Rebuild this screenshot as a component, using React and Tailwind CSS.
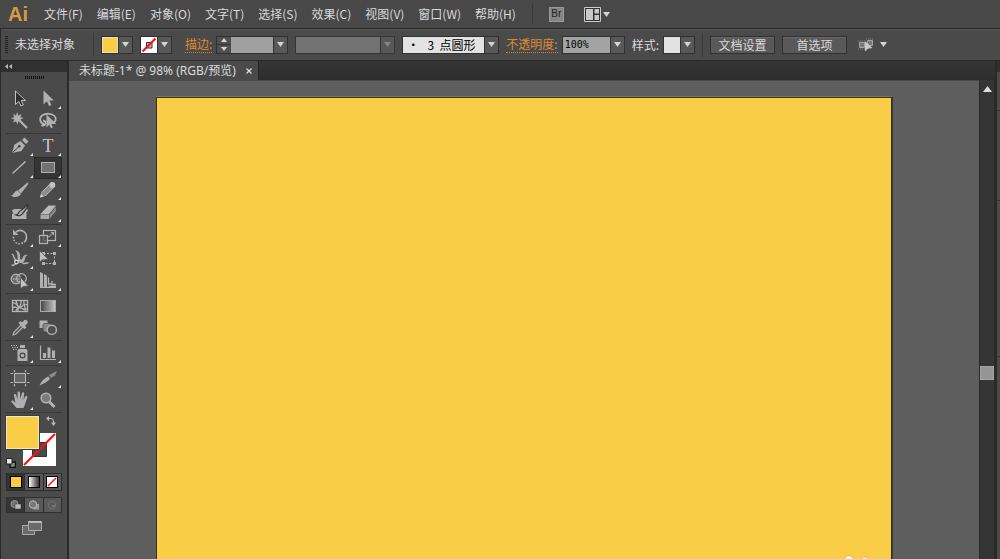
import { useState } from 'react'

const menus = ['文件(F)', '编辑(E)', '对象(O)', '文字(T)', '选择(S)', '效果(C)', '视图(V)', '窗口(W)', '帮助(H)']

function Icon({ children }) {
  return (
    <svg viewBox="0 0 20 20" className="h-5 w-5" fill="none" stroke="#b4b4b4" strokeWidth="1.2">
      {children}
    </svg>
  )
}

const solid = { fill: '#b0b0b0', stroke: 'none' }

const toolGroups = [
  [
    {
      name: '选择工具',
      icon: <path d="M5.5 2v13.500l3.300-3 2.200 4.500 2.400-1.100-2.200-4.400h4.300z" fill="#2e2e2e" stroke="#c4c4c4" strokeWidth="1" />,
    },
    {
      name: '直接选择工具',
      more: true,
      icon: <path d="M5.5 1.500v14l3.300-3.200 2.200 4.700 2.500-1.100-2.200-4.500h4.500z" {...solid} />,
    },
    {
      name: '魔棒工具',
      icon: (
        <>
          <path d="M7.3 1l1.1 3.4L11.6 3l-1.3 3.1 3.4 1.2-3.4 1.2 1.3 3.1-3.2-1.3-1.1 3.4-1.2-3.4L3 11.6l1.3-3.1L1 7.3l3.3-1.2L3 3l3.1 1.4z" {...solid} />
          <path d="M9 9l8 8" strokeWidth="2.2" />
        </>
      ),
    },
    {
      name: '套索工具',
      icon: (
        <>
          <path d="M6 13.200C1.500 12 1 6.500 4.500 4.200c3.500-2.200 9.500-1.800 12 .8 2.300 2.500 1 6-1.500 7.200M5 9.500c2 0 3.500 2 2.200 3.800-1 1.500-2.700 1.700-3.700.7" strokeWidth="1.800" />
          <path d="M8.500 3.500v13l2.800-2.800 1.600 3.600 1.900-.8-1.500-3.400h5z" {...solid} />
        </>
      ),
    },
  ],
  [
    {
      name: '钢笔工具',
      more: true,
      icon: (
        <>
          <path d="M2 17l2.500-8.500L10.500 5l4.500 4.500-3.500 5.500z" {...solid} />
          <path d="M12 4l2.500-2.500 4 4L16 8z" {...solid} />
          <path d="M2.500 16.500L8.500 11" stroke="#3c3c3c" strokeWidth="1" />
          <circle cx="9.300" cy="10.300" r="1.300" fill="#3c3c3c" stroke="none" />
        </>
      ),
    },
    { name: '文字工具', more: true, letter: 'T' },
    { name: '直线段工具', more: true, icon: <path d="M2.500 15.500L15.500 3.500" strokeWidth="1.500" /> },
    {
      name: '矩形工具',
      more: true,
      icon: <rect x="3.500" y="4.500" width="13" height="10" fill="#727272" stroke="#aeaeae" strokeWidth="1" />,
    },
    {
      name: '画笔工具',
      icon: (
        <>
          <path d="M1 15.500c3-.2 3-4.500 6.500-5l3.500 3.500c-2 3.500-7 4-10 1.500z" {...solid} />
          <path d="M8 10.500L17.500 2.500l1 1.200-7.500 9.800z" {...solid} />
        </>
      ),
    },
    {
      name: '铅笔工具',
      more: true,
      icon: (
        <>
          <path d="M2 17.500l1.500-5.500L11.500 4l4 4-8 8z" fill="#8e8e8e" stroke="none" />
          <path d="M2 17.500l1-3.500 2.500 2.500z" fill="#d8d8d8" stroke="none" />
          <path d="M3.500 12.500l8-8M7 16.200l8-8" stroke="#b8b8b8" strokeWidth=".9" />
          <circle cx="14.300" cy="5" r="3" fill="#c4c4c4" stroke="none" />
        </>
      ),
    },
    {
      name: '斑点画笔工具',
      icon: (
        <>
          <path d="M2 9c0-1.500 2-2 4-2h11l1 2-1.500 1V17H2v-5l1.500-.5z" {...solid} />
          <path d="M6 13c3-.2 2-3.500 5-4.500L18 2.500l.5 1-5.500 7.500c-1.500 2.500-4.500 3.500-7 2z" fill="#b0b0b0" stroke="#383838" strokeWidth="1.300" />
        </>
      ),
    },
    {
      name: '橡皮擦工具',
      more: true,
      icon: (
        <>
          <path d="M2.500 12L10.500 3.500H18l-7 8.500z" fill="#bababa" stroke="none" />
          <path d="M2.500 12.500H11v4.500H2.500z" fill="#a8a8a8" stroke="none" />
          <path d="M11.500 12.500L18 4.500V9l-6.500 8z" fill="#868686" stroke="none" />
        </>
      ),
    },
  ],
  [
    {
      name: '旋转工具',
      more: true,
      icon: (
        <>
          <path d="M6 5c4.500-3.500 10.500-.5 10.500 5.200 0 2-1 4-2.500 5" strokeWidth="1.600" />
          <path d="M13 15.800C8 18.500 3 15 3.500 9.500" strokeWidth="1.600" strokeDasharray="1.600 1.500" />
          <path d="M3 2.500v5.500h5.500z" {...solid} />
        </>
      ),
    },
    {
      name: '比例缩放工具',
      more: true,
      icon: (
        <>
          <rect x="5.500" y="3.500" width="12" height="10" strokeWidth="1.200" />
          <rect x="1.500" y="8.500" width="8" height="8" fill="#555" fillOpacity=".8" strokeWidth="1.200" />
          <path d="M10.500 10l4-3.500" strokeDasharray="1.500 .8" />
          <path d="M12.500 5H16v3.500z" {...solid} />
        </>
      ),
    },
    {
      name: '宽度工具',
      more: true,
      icon: (
        <>
          <path d="M5 1.500c4-.2 5.500 3.500 5 7 0 2.500 1.500 3 2.500.5 1-2.800 3.200-4.500 5.500-2.500-3-.2-2.500 2-3.500 5-1.300 3.500-5.500 3.300-6.500 0C7 8 8.500 4 5 1.500z" {...solid} />
          <path d="M2 5c3 2 1 5 5 8M1.500 16.500c3 0 4-1 5-3.500M12.500 14.500c2.500.5 4-1 6-.5" strokeWidth="1.500" />
          <circle cx="6.500" cy="13" r="1.800" fill="#4a4a4a" stroke="#e2e2e2" strokeWidth="1.200" />
        </>
      ),
    },
    {
      name: '自由变换工具',
      icon: (
        <>
          <rect x="5.500" y="4.500" width="11" height="10" strokeDasharray="2 1.500" strokeWidth="1" />
          <path d="M4 3h3v3H4zM15 3h3v3h-3zM15 13h3v3h-3zM4 13h3v3H4z" {...solid} />
          <path d="M1.500 1.500v12l2.800-2.700 6.200-.3z" fill="#bdbdbd" stroke="#464646" strokeWidth=".7" />
        </>
      ),
    },
    {
      name: '形状生成器工具',
      more: true,
      icon: (
        <>
          <circle cx="6" cy="8" r="4.800" fill="#6a6a6a" />
          <circle cx="11.500" cy="7.500" r="4.800" />
          <path d="M3 8h9" strokeDasharray="1.200 1" strokeWidth="1.600" />
          <path d="M10.500 6.500v11.500l2.600-2.600L18.500 15z" fill="#c4c4c4" stroke="#464646" strokeWidth=".7" />
        </>
      ),
    },
    {
      name: '透视网格工具',
      more: true,
      icon: (
        <>
          <path d="M2 1l3 1.500V17H2zM6 3l3 1.500V17H6z" {...solid} />
          <path d="M10.500 6.500V13H14M10.500 15.500H18M5 16.300h13M14 10v3.500h4" strokeWidth="1.300" />
        </>
      ),
    },
  ],
  [
    {
      name: '网格工具',
      icon: (
        <>
          <rect x="2.500" y="4.500" width="15" height="11" strokeWidth="1.300" />
          <path d="M3 7c4-1 5 6 8 4s3-4 6-2M6 15c0-3 6-3 5-10M3 12c3-3 3 1 6 0s4 3 8 1M6 5c1 4 3 3 2 10M14 5c-1 4 2 5 1 10" strokeWidth="1.300" />
        </>
      ),
    },
    {
      name: '渐变工具',
      icon: (
        <>
          <defs>
            <linearGradient id="tool-gradient">
              <stop offset="0" stopColor="#444" />
              <stop offset="1" stopColor="#c8c8c8" />
            </linearGradient>
          </defs>
          <rect x="2.500" y="4.500" width="15" height="11" fill="url(#tool-gradient)" stroke="#a8a8a8" strokeWidth="1" />
        </>
      ),
    },
    {
      name: '吸管工具',
      more: true,
      icon: (
        <>
          <path d="M3 17l1-3 7-7 2 2-7 7z" strokeWidth="1.100" fill="#565656" />
          <path d="M8.500 5l2-2L12 4.500l2-2.300c1.800-1.800 5 1.200 3.300 3.300L15 7.800l1.500 1.500-2 2z" {...solid} />
        </>
      ),
    },
    {
      name: '混合工具',
      icon: (
        <>
          <rect x="1.500" y="2.500" width="8" height="7.500" {...solid} />
          <rect x="5" y="5.500" width="8.500" height="8.500" rx="2" fill="#8a8a8a" stroke="#4b4b4b" strokeWidth=".8" />
          <circle cx="13.800" cy="11.800" r="4.600" fill="#4e4e4e" strokeWidth="1.400" />
        </>
      ),
    },
  ],
  [
    {
      name: '符号喷枪工具',
      more: true,
      icon: (
        <>
          <path d="M1 2.500h7M2 4.500h7M3 6.500h5" strokeDasharray="1.200 1.200" />
          <path d="M10 2h5v3h-5zM8.500 6h8l1 1.500V18h-10V7.500z" {...solid} />
          <circle cx="12.500" cy="12.500" r="2.400" fill="#b0b0b0" stroke="#444" />
        </>
      ),
    },
    {
      name: '柱形图工具',
      more: true,
      icon: (
        <>
          <path d="M2.500 2.500v14H18" strokeWidth="1.200" />
          <path d="M5 10h3v5H5zM9.500 4.500h3V15h-3zM14 7.500h3V15h-3z" {...solid} />
        </>
      ),
    },
  ],
  [
    {
      name: '画板工具',
      icon: (
        <>
          <rect x="4.500" y="5.500" width="11" height="9" fill="#666" strokeWidth="1.100" />
          <path d="M4.500 2v2M15.500 2v2M4.500 16v2.500M15.500 16v2.500M.5 5.500H3M17 5.500h2.500M.5 14.500H3M17 14.500h2.500" />
        </>
      ),
    },
    {
      name: '切片工具',
      more: true,
      icon: (
        <>
          <path d="M1.500 17.500c2-5 5.500-7.500 9-9l1.500 2.500c-3 3-6 4.500-10.500 6.500z" {...solid} />
          <path d="M11 7L19 3l-2 4.500-4 2.500z" fill="#8c8c8c" stroke="none" />
        </>
      ),
    },
    {
      name: '抓手工具',
      more: true,
      icon: (
        <path
          d="M6.500 18L1.500 12c-.7-1.400.9-2.200 2-1.100l2 2L4 5.500c-.2-1.600 1.800-1.900 2.200-.4l1.300 4.400.1-6.700c.1-1.700 2.300-1.700 2.400 0l.4 6.400 1.500-5.900c.4-1.500 2.500-1.100 2.300.5l-.8 6.300 1.900-3.600c.8-1.400 2.600-.5 2 1L15 14.200 13.500 18z"
          {...solid}
        />
      ),
    },
    {
      name: '缩放工具',
      icon: (
        <>
          <path d="M11 11.500l5.500 5.500" strokeWidth="2.800" />
          <circle cx="8" cy="8" r="4.800" fill="#7b7b7b" strokeWidth="1.500" />
        </>
      ),
    },
  ],
]

function Tool({ tool, active, onSelect }) {
  return (
    <button
      aria-label={tool.name}
      onClick={() => onSelect(tool.name)}
      className={`relative flex h-[22px] items-center justify-center border ${
        active ? 'border-[#292929] bg-[#353535]' : 'border-transparent'
      }`}
    >
      {tool.letter ? (
        <span className="font-['Liberation_Serif',serif] text-lg leading-5 text-[#c4c4c4]">{tool.letter}</span>
      ) : (
        <Icon>{tool.icon}</Icon>
      )}
      {tool.more && (
        <svg viewBox="0 0 3 3" className="absolute right-0 bottom-0 h-[3px] w-[3px]">
          <path d="M3 0v3H0z" fill="#e8e8e8" />
        </svg>
      )}
    </button>
  )
}

function Triangle({ dim }) {
  return (
    <svg viewBox="0 0 7 5" className="h-[5px] w-[7px]">
      <path d="M0 0h7L3.500 5z" fill={dim ? '#858585' : '#d4d4d4'} />
    </svg>
  )
}

function ArrowCell({ dim }) {
  return (
    <span className="pointer-events-none flex w-[14px] shrink-0 items-center justify-center border-l border-[#333] bg-[#585858]">
      <Triangle dim={dim} />
    </span>
  )
}

function SwatchButton({ label, children }) {
  return (
    <button aria-label={label} className="flex h-[18px] w-8 shrink-0 border border-[#303030] bg-[#303030]">
      <span className="h-4 w-4">{children}</span>
      <ArrowCell />
    </button>
  )
}

// white tile with a red diagonal, the "none" paint
function NonePaint({ hole }) {
  return (
    <svg viewBox="0 0 16 16" className="block h-full w-full">
      <path d="M0 0h16v16H0z" fill="#fff" />
      {hole && <path d="M5.500 5.500h5.500v5.500h-5.500z" fill="#bbb" stroke="#333" />}
      <path d="M1.500 14.500l13-13" stroke="#ff0f0f" strokeWidth="2.200" />
    </svg>
  )
}

function MenuBar() {
  return (
    <header className="flex h-7 shrink-0 items-center bg-[#484848] pl-2">
      <div className="w-9 font-['Liberation_Sans_Narrow','Liberation_Sans',sans-serif] text-xl leading-6 font-bold text-[#d89a42]">
        Ai
      </div>
      <nav className="flex gap-3.5">
        {menus.map((menu) => (
          <button key={menu} className="whitespace-nowrap">
            {menu}
          </button>
        ))}
      </nav>
      <div className="mr-4 ml-4 h-5 w-px bg-[#383838]" />
      <button className="mr-5 flex h-[15px] w-[15px] items-center justify-center border border-[#999] bg-[#858585] font-['Liberation_Sans',sans-serif] text-[10px] text-[#222]">
        Br
      </button>
      <button aria-label="排列文档" className="flex items-center gap-0.5">
        <svg viewBox="0 0 17 15" className="h-[15px] w-[17px]">
          <path d="M.5.5h16v14H.5z" fill="#333" stroke="#ccc" />
          <path d="M2 2h7v11H2zM10.500 2H15v4.500h-4.500zM10.500 8H15v5h-4.500z" fill="#c9c9c9" />
        </svg>
        <Triangle />
      </button>
    </header>
  )
}

function StepArrow({ label, up }) {
  return (
    <button aria-label={label} className="flex flex-1 items-center justify-center">
      <svg viewBox="0 0 6 4" className="h-1 w-1.5">
        <path d={up ? 'M0 4h6L3 0z' : 'M0 0h6L3 4z'} fill="#d8d8d8" />
      </svg>
    </button>
  )
}

function Field({ id, label, children }) {
  return (
    <div className="flex items-center gap-1">
      <label htmlFor={id} className="border-b border-dotted border-[#c98236] leading-4 text-[#dc8a33]">
        {label}
      </label>
      {children}
    </div>
  )
}

function ControlBar() {
  return (
    <section className="flex h-8 shrink-0 items-center gap-[7px] border-t border-l border-[#2a2a2a] bg-[#4a4a4a] pl-1 whitespace-nowrap shadow-[inset_0_1px_0_#565656]">
      <svg viewBox="0 0 3 18" className="h-[18px] w-[3px]">
        <path d="M1.500 0v18" stroke="#222" strokeWidth="3" strokeDasharray="1 1" />
      </svg>
      <span className="w-[71px] pb-0.5">未选择对象</span>
      <div className="h-6 w-px bg-[#3a3a3a]" />
      <SwatchButton label="填色">
        <span className="block h-full w-full border border-[#e8e0c0] bg-[#f9cd45]" />
      </SwatchButton>
      <SwatchButton label="描边颜色">
        <NonePaint hole />
      </SwatchButton>
      <div className="ml-1.5">
        <Field id="stroke-width" label="描边:">
          <div className="flex h-[18px] w-[72px] border border-[#303030] bg-[#505050]">
            <div className="flex w-[14px] shrink-0 flex-col divide-y divide-[#333]">
              <StepArrow label="增加" up />
              <StepArrow label="减少" />
            </div>
            <input id="stroke-width" className="min-w-0 flex-1 bg-[#a0a0a0] px-1 text-black outline-none" />
            <ArrowCell />
          </div>
        </Field>
      </div>
      <div className="flex h-[18px] w-[100px] border border-[#363636]">
        <select aria-label="宽度配置" disabled className="min-w-0 flex-1 appearance-none bg-[#727272]" />
        <ArrowCell dim />
      </div>
      <div className="flex h-[18px] w-[97px] border border-[#303030]">
        <select
          aria-label="画笔定义"
          className="min-w-0 flex-1 appearance-none bg-[#e3e3e3] pl-1 leading-4 whitespace-pre text-black outline-none"
        >
          <option>•&nbsp;&nbsp;&nbsp;3&nbsp; 点圆形</option>
        </select>
        <ArrowCell />
      </div>
      <Field id="opacity" label="不透明度:">
        <div className="flex h-[18px] w-[63px] border border-[#303030]">
          <input
            id="opacity"
            defaultValue="100%"
            className="min-w-0 flex-1 bg-[#a3a3a3] pl-0.5 font-['DejaVu_Sans_Mono',monospace] text-[10px] text-black outline-none"
          />
          <ArrowCell />
        </div>
      </Field>
      <div className="flex items-center gap-1">
        <span>样式:</span>
        <SwatchButton label="图形样式">
          <span className="block h-full w-full bg-[#e2e2e2]" />
        </SwatchButton>
      </div>
      <div className="h-6 w-px bg-[#3a3a3a]" />
      <button className="h-[18px] w-[65px] border border-[#303030] bg-[#595959] leading-4 shadow-[inset_0_1px_0_#6a6a6a]">
        文档设置
      </button>
      <button className="h-[18px] w-[65px] border border-[#303030] bg-[#595959] leading-4 shadow-[inset_0_1px_0_#6a6a6a]">
        首选项
      </button>
      <button aria-label="选择类似的对象" className="ml-1 flex items-center gap-1.5">
        <svg viewBox="0 0 16 14" className="h-[14px] w-4" fill="#777" stroke="#a5a5a5">
          <path d="M1.500 4.500h5v5h-5zM9.500 2.500h5v5h-5z" />
          <path d="M0 3h8M0 11h8M8 1h8" strokeDasharray="1 1" stroke="#8a8a8a" />
          <path d="M7 3v10.500l2.800-2.800L14.500 10z" fill="#c8c8c8" stroke="none" />
        </svg>
        <Triangle />
      </button>
    </section>
  )
}

function PaintControls() {
  return (
    <>
      <div className="relative h-[54px]">
        <button aria-label="描边" className="absolute top-[19px] left-[17px] h-[33px] w-[33px]">
          <svg viewBox="0 0 33 33" className="h-full w-full">
            <path d="M0 0h33v33H0z" fill="#fff" />
            <path d="M9.500 9.500h14v14h-14z" fill="#4a4a4a" stroke="#333" />
            <path d="M1 32L32 1" stroke="#ff0f0f" strokeWidth="2.200" />
          </svg>
        </button>
        <button aria-label="填色" className="absolute top-0.5 left-0 h-[33px] w-[33px] border border-[#f0e6c4] bg-[#f9cd45] outline outline-[#3c3c3c]" />
        <button aria-label="互换填色和描边" className="absolute top-0.5 right-1.5">
          <svg viewBox="0 0 10 10" className="h-[10px] w-[10px]" fill="#bbb">
            <path d="M2.500 2.500H5q2.500 0 2.500 2.500v2" fill="none" stroke="#bbb" />
            <path d="M3 0v5L0 2.500zM5 6.500h5L7.500 10z" />
          </svg>
        </button>
        <button aria-label="默认填色和描边" className="absolute bottom-0 left-0">
          <svg viewBox="0 0 10 10" className="h-[10px] w-[10px]">
            <path d="M4 4h5.500v5.500H4z" fill="#888" stroke="#111" strokeWidth="1.500" />
            <path d="M.5.500h5.500v5.500H.5z" fill="#e8e8e8" stroke="#222" />
          </svg>
        </button>
      </div>
      <div className="mt-[5px] flex h-[18px] divide-x divide-[#2c2c2c] border border-[#2c2c2c] bg-[#565656]">
        <button aria-label="颜色" className="flex flex-1 items-center justify-center bg-[#333]">
          <span className="h-3 w-3 border border-black bg-[#f9cd45]" />
        </button>
        <button aria-label="渐变" className="flex flex-1 items-center justify-center">
          <span className="h-3 w-3 border border-black bg-linear-to-r from-white to-[#3a3030]" />
        </button>
        <button aria-label="无" className="flex flex-1 items-center justify-center">
          <span className="h-3 w-3 border border-black">
            <NonePaint />
          </span>
        </button>
      </div>
      <div className="mt-1.5 flex h-4 divide-x divide-[#2c2c2c] border border-[#303030] bg-[#595959]">
        <button aria-label="正常绘图" className="flex flex-1 items-center justify-center bg-[#363636]">
          <svg viewBox="0 0 12 10" className="h-[10px] w-3">
            <circle cx="4.500" cy="4" r="3.500" fill="#707070" stroke="#999" />
            <path d="M5 4h6v5H5z" fill="#bbb" stroke="#333" strokeWidth=".5" />
          </svg>
        </button>
        <button aria-label="背面绘图" className="flex flex-1 items-center justify-center">
          <svg viewBox="0 0 12 10" className="h-[10px] w-3">
            <path d="M5 4h6v5.500H5z" fill="#999" />
            <circle cx="5" cy="4.500" r="3.700" fill="#777" stroke="#bbb" />
          </svg>
        </button>
        <button aria-label="内部绘图" className="flex flex-1 items-center justify-center">
          <svg viewBox="0 0 12 10" className="h-[10px] w-3">
            <circle cx="6" cy="5" r="3.700" fill="none" stroke="#737373" />
            <path d="M6 5h3v2H6z" fill="#737373" />
          </svg>
        </button>
      </div>
      <button aria-label="更改屏幕模式" className="mx-auto mt-[7px] block pr-1">
        <svg viewBox="0 0 20 16" className="h-4 w-5" fill="#6b6b6b" stroke="#aaa">
          <path d="M.5 5.500h12v9H.5z" />
          <path d="M6.500 1.500h13v9h-13z" />
          <path d="M6.500 2h13" stroke="#ccc" strokeWidth="1.500" />
        </svg>
      </button>
    </>
  )
}

function ToolPanel() {
  const [selected, setSelected] = useState('矩形工具')

  return (
    <aside className="w-[69px] shrink-0 border-r-2 border-l border-[#2a2a2a] bg-[#4a4a4a]">
      <div className="flex h-[11px] items-center bg-[#303030] pl-1">
        <svg viewBox="0 0 7 5" className="h-[5px] w-[7px]">
          <path d="M3 0v5L0 2.500zM7 0v5L4 2.500z" fill="#bbb" />
        </svg>
      </div>
      <svg viewBox="0 0 19 3" className="mx-auto mt-1 h-[3px] w-[19px]">
        <path d="M0 1.500h19" stroke="#111" strokeWidth="3" strokeDasharray="1 1" />
      </svg>
      <div className="mt-[9px] px-[5px]">
        {toolGroups.map((group) => (
          <div key={group[0].name} className="mb-px grid grid-cols-2 border-b border-[#373737] pb-px">
            {group.map((tool) => (
              <Tool key={tool.name} tool={tool} active={tool.name === selected} onSelect={setSelected} />
            ))}
          </div>
        ))}
        <PaintControls />
      </div>
    </aside>
  )
}

function DocumentWindow() {
  return (
    <main className="flex min-w-0 flex-1 flex-col">
      <div className="flex h-[19px] shrink-0 bg-linear-to-b from-[#353535] to-[#2d2d2d]">
        <div className="flex items-center gap-2.5 border-r border-[#252525] bg-[#4a4a4a] pr-1.5 pl-2.5 font-['Noto_Sans','Noto_Sans_CJK_SC',sans-serif] whitespace-nowrap">
          未标题-1* @ 98% (RGB/预览)
          <button aria-label="关闭">
            <svg viewBox="0 0 6 6" className="h-[6px] w-[6px]">
              <path d="M.5.500l5 5M5.500.500l-5 5" stroke="#ddd" strokeWidth="1.200" />
            </svg>
          </button>
        </div>
      </div>
      <div className="flex min-h-0 flex-1">
        <div className="flex min-w-0 flex-1 border-t border-[#484848] bg-[#5e5e5e] pt-4 pr-[87px] pl-[87px]">
          <div className="relative flex-1 overflow-hidden border-x border-t border-[#33301f] bg-[#f9cd45] shadow-[0_-1px_0_#8d783b,1px_0_0_#3a3a3a]">
            <svg viewBox="0 0 28 4" className="absolute right-[20px] bottom-0 h-1 w-7">
              <circle cx="6" cy="5" r="4.500" fill="#fff4cf" stroke="#d9b95b" />
              <circle cx="22" cy="6" r="4.500" fill="#f7e3a0" stroke="#d9b95b" />
            </svg>
          </div>
        </div>
        <div className="w-4 shrink-0 border-x border-[#292929] bg-[#353535]">
          <svg viewBox="0 0 9 6" className="mx-auto mt-1.5 h-[6px] w-[9px]">
            <path d="M4.500 0L9 6H0z" fill="#dedede" />
          </svg>
          <div className="mt-[274px] h-[14px] border border-[#a5a5a5] bg-[#959595]" />
        </div>
      </div>
    </main>
  )
}

export default function App() {
  return (
    <div className="flex h-screen flex-col overflow-hidden bg-[#2a2a2a] font-['Noto_Sans_CJK_SC',sans-serif] text-xs text-[#dadada]">
      <MenuBar />
      <ControlBar />
      <div className="flex min-h-0 flex-1 border-t border-[#2a2a2a]">
        <ToolPanel />
        <DocumentWindow />
        <aside className="ml-0.5 flex w-[3px] shrink-0 flex-col divide-y divide-[#333] bg-[#4a4a4a]">
          <div className="h-[11px] bg-[#303030]" />
          <div className="h-[39px]" />
          <div className="h-[90px]" />
          <div className="h-[156px]" />
          <div className="flex-1" />
        </aside>
      </div>
    </div>
  )
}
